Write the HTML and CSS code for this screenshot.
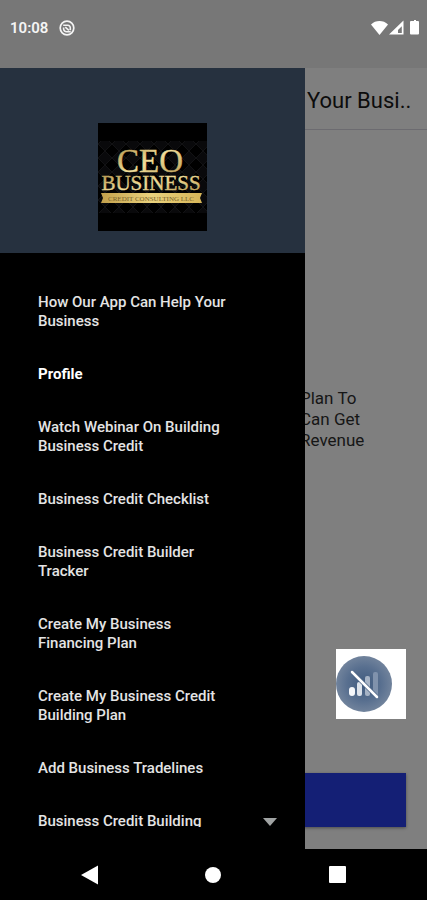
FILE: index.html
```html
<!DOCTYPE html>
<html lang="en">
<head>
<meta charset="utf-8">
<meta name="viewport" content="width=device-width, initial-scale=1">
<title>CEO Business</title>
<link rel="stylesheet" href="styles.css">
</head>
<body>
<header class="status">
  <span class="clock">10:08</span>
  <svg class="notice" width="16" height="16" viewBox="0 0 16 16" fill="none" stroke="#f4f4f4">
    <circle cx="8" cy="8" r="6.8" stroke-width="1.7"/>
    <path d="M4.2 5.2H8.6A2.6 2.6 0 0 1 11.3 8v2.2M4.6 7.6v1.2a2.9 2.9 0 0 0 2.9 2.9h4.2M6.3 7.2l3.6 3.2" stroke-width="1.6"/>
  </svg>
  <svg class="signals" width="48" height="16" viewBox="0 0 48 16" fill="#fff">
    <path d="M0 4.400C4.600-.200 12.400-.200 17 4.400L8.500 15z"/>
    <path fill-rule="evenodd" d="M32.500 .500V14.500H18zM30.800 6.200L27 10v3h3.800z"/>
    <path d="M41 1h2V0h2v1h2q1 0 1 1v11.500q0 1-1 1h-7q-1 0-1-1V2q0-1 1-1z"/>
  </svg>
</header>

<div class="app">
  <main class="page">
    <h1 class="title">Your Busi..</h1>
    <p class="copy">Plan To<br>Can Get<br>Revenue</p>
    <div class="offline">
      <svg width="56" height="56" viewBox="0 0 56 56" role="img" aria-label="No signal">
        <defs><radialGradient id="disc"><stop offset="0" stop-color="#3f5a7e"/><stop offset=".6" stop-color="#586f8f"/><stop offset="1" stop-color="#71839c"/></radialGradient></defs>
        <circle cx="28" cy="28" r="28" fill="url(#disc)"/>
        <rect x="13" y="31" width="6" height="9" rx="3" fill="#f5f7fa"/>
        <rect x="21" y="26" width="5" height="14" rx="2" fill="#dce2ea"/>
        <rect x="29" y="20" width="5" height="20" rx="2" fill="#a6b3c5"/>
        <rect x="37" y="16" width="5" height="24" rx="2" fill="#8092ac"/>
        <path d="M17 17L40 40" stroke="#4c6485" stroke-width="4"/>
        <path d="M16 16L41 41" stroke="#fff" stroke-width="2.500" stroke-linecap="round"/>
      </svg>
    </div>
    <button class="action" type="button" aria-label="Continue"></button>
  </main>

  <aside class="drawer">
    <div class="brand">
      <svg class="logo" width="109" height="108" viewBox="0 0 109 108">
        <defs>
          <linearGradient id="gold" x1="0" y1="0" x2="1" y2="1">
            <stop offset="0" stop-color="#a98b42"/><stop offset=".5" stop-color="#f2df9b"/><stop offset="1" stop-color="#b39349"/>
          </linearGradient>
          <linearGradient id="ribbon">
            <stop offset="0" stop-color="#c2a04c"/><stop offset=".5" stop-color="#ead27d"/><stop offset="1" stop-color="#d6b558"/>
          </linearGradient>
          <pattern id="quilt" width="14" height="14" patternUnits="userSpaceOnUse">
            <path d="M0 7L7 0L14 7L7 14z" fill="#09090b" stroke="#121214"/>
          </pattern>
        </defs>
        <rect width="109" height="108" fill="#000"/>
        <rect y="18" width="109" height="72" fill="url(#quilt)"/>
        <g fill="url(#gold)" stroke="url(#gold)" stroke-width=".4" text-anchor="middle">
          <text class="logo-top" x="52" y="49">CEO</text>
          <text class="logo-name" x="53" y="67">BUSINESS</text>
        </g>
        <path d="M3 70H104L102 75L104 80H3L5 75z" fill="url(#ribbon)"/>
        <text class="logo-tag" x="53" y="78" text-anchor="middle">CREDIT CONSULTING LLC</text>
      </svg>
    </div>
    <nav class="menu">
      <a href="#">How Our App Can Help Your Business</a>
      <a href="#" class="strong">Profile</a>
      <a href="#">Watch Webinar On Building Business Credit</a>
      <a href="#">Business Credit Checklist</a>
      <a href="#">Business Credit Builder Tracker</a>
      <a href="#">Create My Business Financing Plan</a>
      <a href="#">Create My Business Credit Building Plan</a>
      <a href="#">Add Business Tradelines</a>
      <a href="#" class="group">Business Credit Building
        <svg width="14" height="8" viewBox="0 0 14 8"><path d="M0 0H14L7 8z" fill="#a0a3a3"/></svg>
      </a>
    </nav>
  </aside>
</div>

<footer class="system">
  <button type="button" aria-label="Back"><svg width="18" height="20" viewBox="0 0 18 20"><path d="M0 10L17 .500V19.500z" fill="#fff"/></svg></button>
  <button type="button" aria-label="Home"><svg width="16" height="16" viewBox="0 0 16 16"><circle cx="8" cy="8" r="8" fill="#fff"/></svg></button>
  <button type="button" aria-label="Recent apps"><svg width="17" height="17" viewBox="0 0 17 17"><rect width="17" height="17" rx="1" fill="#fff"/></svg></button>
</footer>
</body>
</html>
```
FILE: styles.css
```css
* { box-sizing: border-box; }

body {
  margin: 0;
  height: 100vh;
  display: flex;
  flex-direction: column;
  background: #000;
  font-family: Roboto, "Liberation Sans", sans-serif;
}

svg { display: block; flex: none; }

.status {
  flex: none;
  height: 68px;
  display: flex;
  align-items: center;
  padding: 0 8px 13px 10px;
  background: #777;
  color: #f4f4f4;
}
.clock { font-size: 15px; font-weight: 600; line-height: 20px; }
.notice { margin-left: 11px; }
.signals { margin-left: auto; }

.app {
  position: relative;
  flex: 1;
  min-height: 0;
  overflow: hidden;
}

.page {
  height: 100%;
  display: flex;
  flex-direction: column;
  background: #7f7f7f;
  color: #161616;
}
.title {
  margin: 0;
  padding: 18px 16px 14px 307px;
  border-bottom: 1px solid #6c6b70;
  font-size: 22px;
  font-weight: 400;
  line-height: 29px;
  white-space: nowrap;
  color: #0c0c0c;
}
.copy {
  margin: auto 0;
  padding: 60px 0 0 300px;
  font-size: 17px;
  line-height: 21px;
}
.offline {
  align-self: flex-end;
  width: 70px;
  height: 70px;
  margin-right: 21px;
  padding: 7px 0;
  background: #fff;
}
.action {
  height: 54px;
  margin: 54px 21px 22px;
  border: 0;
  background: #141f75;
  box-shadow: 0 1px 3px #0006;
}

.drawer {
  position: absolute;
  inset: 0 auto 0 0;
  width: 305px;
  display: flex;
  flex-direction: column;
  padding-bottom: 22px;
  background: #000;
}
.brand {
  flex: none;
  display: flex;
  justify-content: center;
  padding: 55px 0 22px;
  background: #26313f;
}
.logo text { font-family: "Liberation Serif", serif; }
.logo .logo-top { font-size: 33px; }
.logo .logo-name { font-size: 21px; }
.logo .logo-tag { font-size: 7px; fill: #76602a; }

.menu {
  flex: 1;
  min-height: 0;
  overflow: hidden;
  display: flex;
  flex-direction: column;
  gap: 34px;
  padding: 40px 28px 0 38px;
}
.menu a {
  flex: none;
  padding-right: 44px;
  color: #e4e4e4;
  font-size: 15px;
  font-weight: 500;
  line-height: 19px;
  text-decoration: none;
}
.menu .strong { color: #fff; font-weight: 700; }
.menu .group {
  display: flex;
  align-items: center;
  justify-content: space-between;
  padding-right: 0;
}

.system {
  flex: none;
  height: 51px;
  display: grid;
  grid-template-columns: repeat(3, 1fr);
  align-items: center;
  justify-items: center;
  padding: 0 28px;
}
.system button {
  padding: 0;
  border: 0;
  background: none;
}
```
